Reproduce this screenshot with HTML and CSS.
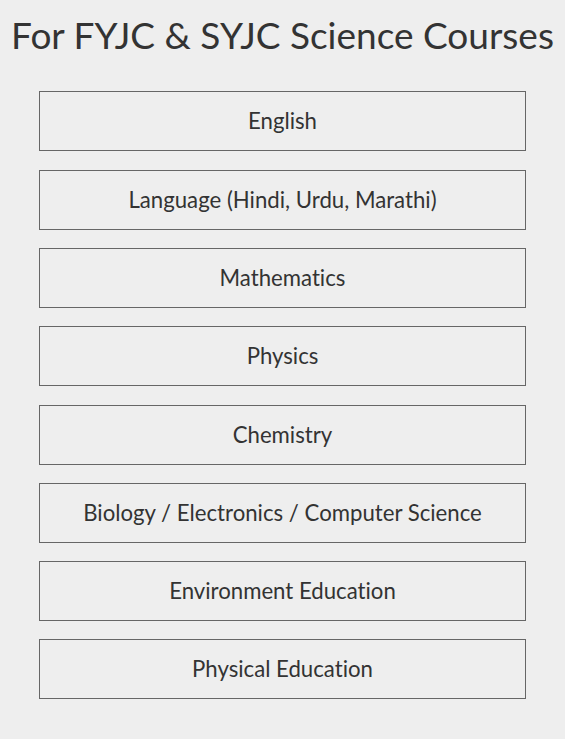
FILE: index.html
```html
<!DOCTYPE html>
<html>
<head>
<meta charset="utf-8">
<link rel="stylesheet" href="styles.css">
</head>
<body>
<h1 class="title">For FYJC &amp; SYJC Science Courses</h1>
<ul class="courses">
  <li class="course">English</li>
  <li class="course">Language (Hindi, Urdu, Marathi)</li>
  <li class="course">Mathematics</li>
  <li class="course">Physics</li>
  <li class="course">Chemistry</li>
  <li class="course">Biology / Electronics / Computer Science</li>
  <li class="course">Environment Education</li>
  <li class="course">Physical Education</li>
</ul>
</body>
</html>
```

FILE: styles.css
```css
html, body {
  margin: 0;
  padding: 0;
  background: #eeeeee;
}
body {
  font-family: Lato, "Open Sans", sans-serif;
  color: #333333;
  font-variant-ligatures: none;
}
.title {
  margin: 0;
  padding-top: 10px;
  height: 81px;
  box-sizing: border-box;
  font-size: 37px;
  font-weight: 400;
  line-height: 50px;
  text-align: center;
}
.courses {
  list-style: none;
  margin: 10.4px 39px 0;
  padding: 0;
  display: flex;
  flex-direction: column;
  gap: 18.3px;
}
.course {
  height: 60px;
  box-sizing: border-box;
  border: 1px solid #666666;
  padding-bottom: 1px;
  display: flex;
  align-items: center;
  justify-content: center;
  font-size: 22.2px;
}
```
